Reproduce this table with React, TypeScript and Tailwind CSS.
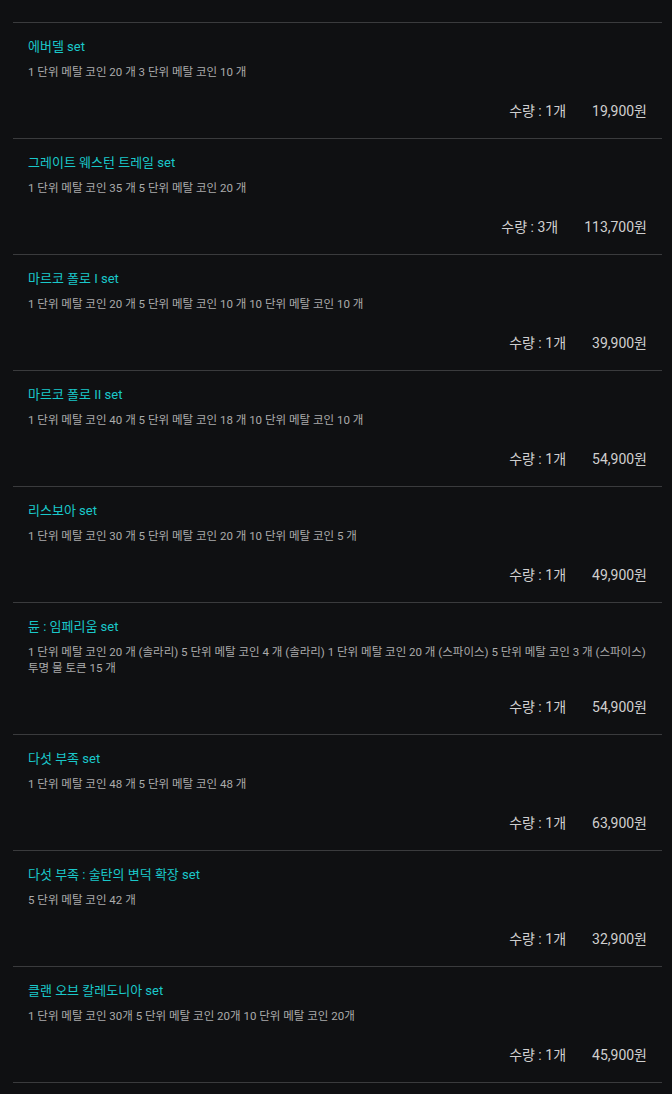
import React from 'react';

type Item = { name: string; desc: string; qty: number; price: string };

const items: Item[] = [
  { name: '에버델 set', desc: '1 단위 메탈 코인 20 개 3 단위 메탈 코인 10 개', qty: 1, price: '19,900원' },
  { name: '그레이트 웨스턴 트레일 set', desc: '1 단위 메탈 코인 35 개 5 단위 메탈 코인 20 개', qty: 3, price: '113,700원' },
  { name: '마르코 폴로 I set', desc: '1 단위 메탈 코인 20 개 5 단위 메탈 코인 10 개 10 단위 메탈 코인 10 개', qty: 1, price: '39,900원' },
  { name: '마르코 폴로 II set', desc: '1 단위 메탈 코인 40 개 5 단위 메탈 코인 18 개 10 단위 메탈 코인 10 개', qty: 1, price: '54,900원' },
  { name: '리스보아 set', desc: '1 단위 메탈 코인 30 개 5 단위 메탈 코인 20 개 10 단위 메탈 코인 5 개', qty: 1, price: '49,900원' },
  {
    name: '듄 : 임페리움 set',
    desc: '1 단위 메탈 코인 20 개 (솔라리) 5 단위 메탈 코인 4 개 (솔라리) 1 단위 메탈 코인 20 개 (스파이스) 5 단위 메탈 코인 3 개 (스파이스) 투명 물 토큰 15 개',
    qty: 1,
    price: '54,900원',
  },
  { name: '다섯 부족 set', desc: '1 단위 메탈 코인 48 개 5 단위 메탈 코인 48 개', qty: 1, price: '63,900원' },
  { name: '다섯 부족 : 술탄의 변덕 확장 set', desc: '5 단위 메탈 코인 42 개', qty: 1, price: '32,900원' },
  { name: '클랜 오브 칼레도니아 set', desc: '1 단위 메탈 코인 30개 5 단위 메탈 코인 20개 10 단위 메탈 코인 20개', qty: 1, price: '45,900원' },
];

export default function App() {
  return (
    <div
      className="min-h-screen bg-[#0f1012] pt-[22px] pb-[11px]"
      style={{ fontFamily: 'Roboto, "Noto Sans CJK KR", sans-serif' }}
    >
      <div className="ml-[13px] mr-[10px] border-t border-[#3a3b3d]">
        {items.map((item) => (
          <div key={item.name} className="border-b border-[#3a3b3d] px-[15px] pt-[14px] pb-[17px]">
            <div className="text-[13px] leading-[20px] text-[#1ac8ca]">{item.name}</div>
            <div className="mt-[7px] text-[11.5px] leading-[16px] text-[#ababab]">{item.desc}</div>
            <div className="mt-[21px] flex justify-end gap-[26px] text-[14px] leading-[20px] text-[#cfcfcf]">
              <span>수량 : {item.qty}개</span>
              <span>{item.price}</span>
            </div>
          </div>
        ))}
      </div>
    </div>
  );
}
